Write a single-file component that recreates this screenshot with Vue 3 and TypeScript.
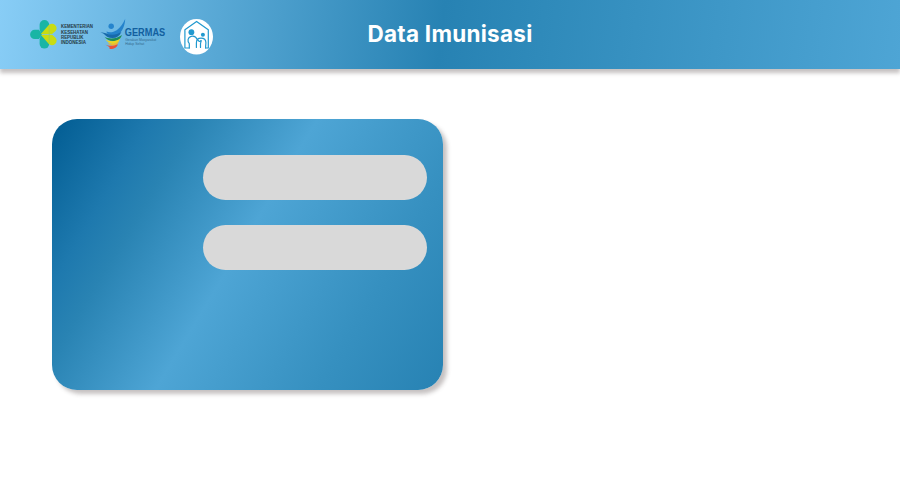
<script setup lang="ts">
const ministryLines: { text: string; width: number }[] = [
  { text: 'KEMENTERIAN', width: 32 },
  { text: 'KESEHATAN', width: 27 },
  { text: 'REPUBLIK', width: 22.5 },
  { text: 'INDONESIA', width: 25 },
]
const fields: string[] = ['first', 'second']
</script>

<template>
  <div class="page">
    <header class="topbar">
      <div class="logos">
        <svg class="ministry" viewBox="0 0 66 32" role="img" aria-label="Kementerian Kesehatan">
          <g fill="#19b5a5">
            <path d="M9.6 5.8a4.8 4.8 0 0 1 9.6 0V8L11 15.4 9.6 10Z" />
            <path d="M9.6 24.8a4.8 4.8 0 0 0 9.6 0V23L11 15.4 9.6 20.6Z" />
            <path d="M4.7 10.8H9L12 15.4 9 20H4.7a4.6 4.6 0 0 1 0-9.2Z" />
          </g>
          <g fill="#c9dc12">
            <path d="M10.8 15.1 18.6 6.2a4.5 4.5 0 0 1 6.5-.3 4.3 4.3 0 0 1 .2 6.4l-3.2 2.8Z" />
            <path d="M10.8 15.8 18.6 24.7a4.5 4.5 0 0 0 6.5.3 4.3 4.3 0 0 0 .2-6.4l-3.2-2.8Z" />
          </g>
          <path d="M19.2 7v17" stroke="#8dcc72" stroke-width=".7" />
          <text
            v-for="(line, i) in ministryLines"
            :key="line.text"
            x="31"
            :y="9.2 + i * 5.3"
            :textLength="line.width"
            lengthAdjust="spacingAndGlyphs"
            class="ministry-text"
          >{{ line.text }}</text>
        </svg>

        <svg class="germas" viewBox="0 0 68 34" role="img" aria-label="Germas">
          <circle cx="11.2" cy="8.2" r="2.7" fill="#2584cd" />
          <path d="M25.2.7c-.2 6.5-2.6 12.8-7.5 16.2-3 1.8-6.4 1.2-9.4-.6-1-.6-1.6-1.5-1.8-2.8 3 1.3 7 .8 10.2-1.3 4.1-3.2 6.6-6.7 8.5-11.5Z" fill="#2482cb" />
          <path d="M.3 14.2c5 .2 8 2.7 12.3 2.6 3 0 6-1.5 8.8-2.8-1.9 4-4.8 6-8.9 6-4 0-6.4-1.6-8-3.5-1-1.1-2.4-1.8-4.2-2.3Z" fill="#1769aa" />
          <path d="M4.5 18.8c4 2.4 11.5 2.6 17.4-1.8-1.4 4.5-4.8 6.4-8.9 6.1-3.8-.1-6.7-1.8-8.5-4.3Z" fill="#208d58" />
          <path d="M5.5 21.6c4.3 2.5 9.9 2.4 14.8-1-1.4 4.2-4.4 5.6-7.6 5.3-2.9-.2-5.3-1.8-7.2-4.3Z" fill="#e9d521" />
          <path d="M7.6 24.7c3.4 1.7 7.3 1.3 11.2-1.3-.8 3.2-3.4 4.6-6.2 4.4-2-.2-3.7-1.3-5-3.1Z" fill="#edb633" />
          <path d="M4.8 26.4c3 1.4 6.4 1.8 9.6 1l3.4-1.2c-.6 3.2-3.9 5.2-8.6 4.8 1.8-1.5-.9-2.9-4.4-4.6Z" fill="#e9503c" />
          <text x="24.8" y="17.9" class="germas-title" textLength="40.4" lengthAdjust="spacingAndGlyphs">GERMAS</text>
          <text x="25.2" y="22.9" class="germas-sub" textLength="31" lengthAdjust="spacingAndGlyphs">Gerakan Masyarakat</text>
          <text x="25.2" y="26.6" class="germas-sub" textLength="19" lengthAdjust="spacingAndGlyphs">Hidup Sehat</text>
        </svg>

        <svg class="family" viewBox="0 0 33 36" role="img" aria-label="Posyandu">
          <ellipse cx="16.5" cy="17.8" rx="16.5" ry="17.8" fill="#fff" />
          <g fill="none" stroke="#2199cf" stroke-width="1.2" stroke-linejoin="round" stroke-linecap="round">
            <path d="M9.3 29H4.9V10.8L16.6 2.4l11.7 8.4V29H25.6" />
            <path d="M9.3 29v-4.3c-2.2-2.5-1.6-6.5 1.8-7.4 3-.8 5 .5 6.2 3.2l1.5 1.5c.8.6 1.7.5 2.2-.4" />
            <path d="M16.4 28.5v-4.6c0-2.9 2-4.7 4.6-4.7 3 0 4.9 1.9 4.9 4.6 0 1.5-.3 2-.3 5.2" />
            <path d="M20.5 28.5v-3.6c0-1.2.6-1.8.6-3.1" />
          </g>
          <circle cx="11.4" cy="13.2" r="2.9" fill="#2199cf" />
          <circle cx="22.9" cy="15.8" r="2" fill="#2199cf" />
        </svg>
      </div>
      <h1 class="title">Data Imunisasi</h1>
    </header>

    <main class="content">
      <section class="card">
        <div v-for="field in fields" :key="field" class="field"></div>
      </section>
    </main>
  </div>
</template>

<style>
body {
  margin: 0;
  background: #fff;
}
</style>

<style scoped>
.page {
  height: 500px;
  overflow: hidden;
  background: #fff;
  font-family: Inter, 'Liberation Sans', sans-serif;
}

.topbar {
  display: grid;
  grid-template-columns: 1fr auto 1fr;
  height: 69px;
  padding: 0 30px;
  box-sizing: border-box;
  background: linear-gradient(97deg, #88cdf6 0%, #2782b3 49%, #2f8aba 60%, #4ea5d5 100%);
  box-shadow: 0 4px 4px rgba(76, 63, 63, 0.32);
}

.logos {
  display: flex;
  align-items: flex-start;
  padding-top: 18px;
}

.logos svg {
  flex: none;
  overflow: visible;
}

.ministry {
  width: 66px;
  height: 32px;
  margin: 1px 4px 0 0;
}

.ministry-text {
  font: 700 4.5px 'Liberation Sans', sans-serif;
  fill: #263944;
}

.germas {
  width: 68px;
  height: 34px;
}

.germas-title {
  font: 700 10px 'Liberation Sans', sans-serif;
  fill: #12609f;
}

.germas-sub {
  font: 3.5px 'Liberation Sans', sans-serif;
  fill: #35698d;
}

.family {
  width: 33px;
  height: 36px;
  margin: 1px 0 0 12px;
}

.title {
  margin: 0;
  padding-top: 19px;
  color: #fff;
  font-size: 22.5px;
  font-weight: 700;
  letter-spacing: 0.27px;
  line-height: 29px;
  white-space: nowrap;
}

.content {
  padding: 50px 52px;
}

.card {
  display: flex;
  flex-direction: column;
  align-items: flex-end;
  gap: 25px;
  width: 391px;
  height: 271px;
  padding: 36px 16px;
  box-sizing: border-box;
  border-radius: 25px;
  background: linear-gradient(121deg, #015c92 0%, #1e79ae 18%, #2983b3 26%, #4ea5d5 48%, #3690c0 77%, #2782b3 100%);
  box-shadow: 4px 4px 4px rgba(76, 63, 63, 0.32);
}

.field {
  width: 224px;
  height: 45px;
  border-radius: 23px;
  background: #d9d9d9;
}
</style>
